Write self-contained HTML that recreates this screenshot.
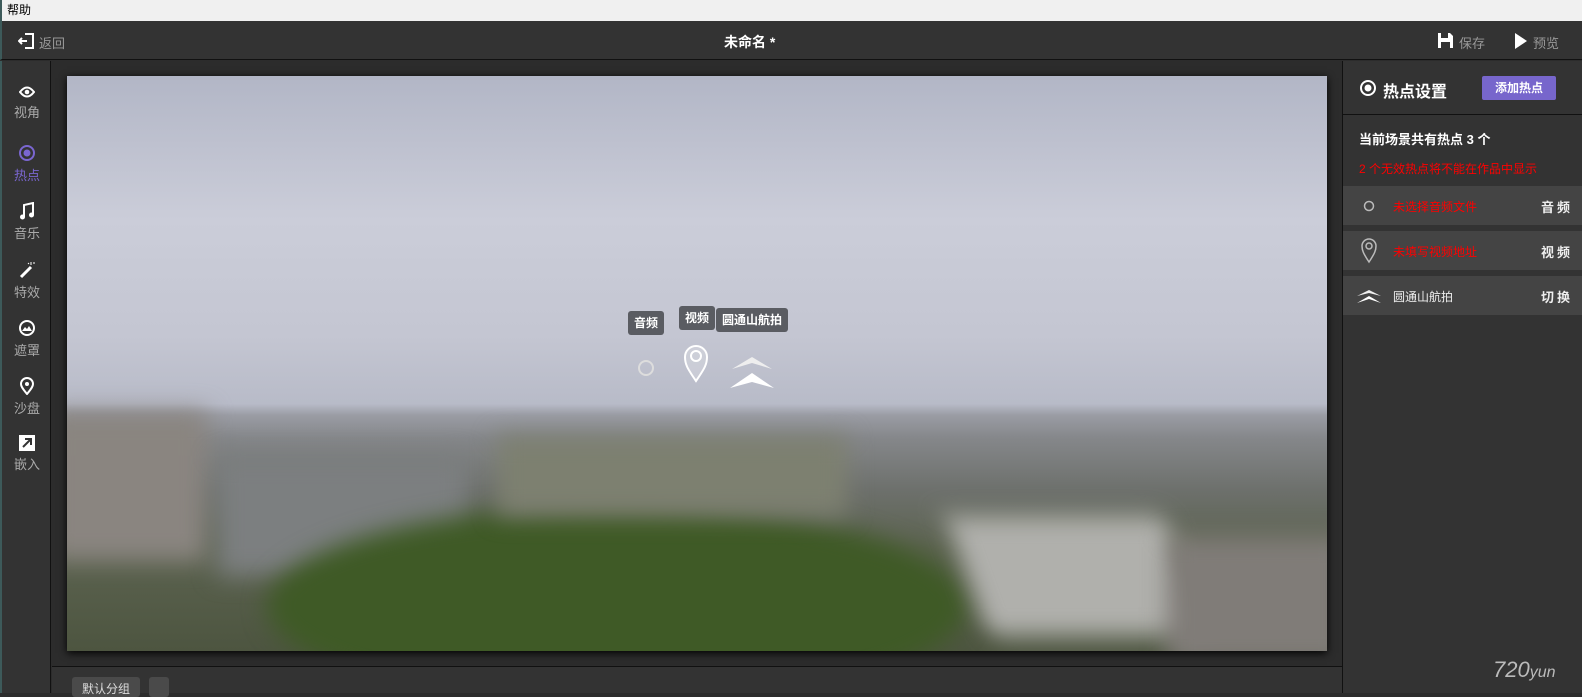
<!DOCTYPE html>
<html><head><meta charset="utf-8"><style>
*{margin:0;padding:0;box-sizing:border-box}
body{width:1582px;height:693px;overflow:hidden;background:#2c2c2c;font-family:"Liberation Sans","Noto Sans CJK SC",sans-serif;position:relative}
.abs{position:absolute}
#menu{left:0;top:0;width:1582px;height:21px;background:#f0f0f0;border-left:2px solid #3d5a5a;font-size:12px;line-height:21px;padding-left:5px;color:#000}
#top{left:0;top:21px;width:1582px;height:39px;background:#333;border-bottom:1px solid #111;border-left:2px solid #3d5a5a}
#side{left:0;top:61px;width:51px;height:632px;background:#333;border-right:1px solid #111;border-left:2px solid #3d5a5a}
.si{position:absolute;left:0;width:50px;text-align:center;font-size:13px;color:#aaa}
.si svg{display:block;margin:0 auto 3px}
#right{left:1342px;top:61px;width:240px;height:632px;background:#333;border-left:1px solid #111}
#pano{left:67px;top:76px;width:1260px;height:575px;overflow:hidden;box-shadow:0 2px 8px #000;
background:linear-gradient(180deg,#b2b6c6 0%,#cbcdd9 25%,#c4c6d2 45%,#b8bbc8 57%,#9a9ca4 59%,#85878a 63%,#6d706c 72%,#5c6350 82%,#4d5540 100%);}
.blob{position:absolute;filter:blur(12px)}
.tag{position:absolute;background:#5a5c62;color:#fff;font-size:12px;font-weight:bold;border-radius:3px;height:24px;line-height:24px;padding:0 6px;white-space:nowrap}
.row{position:absolute;left:0;width:240px;height:39px;background:#444;font-size:12px}
.row .t{position:absolute;left:50px;top:12px;color:#f00}
.row .k{position:absolute;right:10px;top:11px;color:#eee;font-weight:bold;letter-spacing:3px;font-size:13px}
</style></head><body>
<div id="menu" class="abs">帮助</div>
<div id="top" class="abs">
 <svg class="abs" style="left:16px;top:11px" width="18" height="18" viewBox="0 0 18 18"><path d="M7 2h8v14H7" fill="none" stroke="#fff" stroke-width="2"/><path d="M1 9h8M4 6l-3 3 3 3" fill="none" stroke="#fff" stroke-width="2"/></svg>
 <div class="abs" style="left:37px;top:12px;font-size:13px;color:#999">返回</div>
 <div class="abs" style="left:722px;top:11px;font-size:14px;color:#fff;font-weight:bold">未命名 *</div>
 <svg class="abs" style="left:1435px;top:11px" width="17" height="17" viewBox="0 0 17 17"><path d="M1 1h12l3 3v12H1z" fill="#fff"/><rect x="4" y="1" width="7" height="5" fill="#333"/><rect x="4" y="10" width="9" height="6" fill="#333"/></svg>
 <div class="abs" style="left:1457px;top:12px;font-size:13px;color:#999">保存</div>
 <svg class="abs" style="left:1512px;top:12px" width="14" height="16" viewBox="0 0 14 16"><path d="M1 0l12 8-12 8z" fill="#fff"/></svg>
 <div class="abs" style="left:1531px;top:12px;font-size:13px;color:#999">预览</div>
</div>
<div id="side" class="abs">
 <div class="si" style="top:24px"><svg width="16" height="14" viewBox="0 0 16 14"><path d="M1 7Q8-2 15 7Q8 16 1 7z" fill="none" stroke="#fff" stroke-width="2"/><circle cx="8" cy="7" r="2.3" fill="#fff"/></svg>视角</div>
 <div class="si" style="top:83px;color:#7a66d0"><svg width="18" height="18" viewBox="0 0 18 18"><circle cx="9" cy="9" r="7" fill="none" stroke="#7a66d0" stroke-width="2"/><circle cx="9" cy="9" r="3.5" fill="#7a66d0"/></svg>热点</div>
 <div class="si" style="top:141px"><svg width="16" height="18" viewBox="0 0 16 18"><path d="M5 15V3l9-2v12" fill="none" stroke="#fff" stroke-width="2"/><circle cx="3.5" cy="15" r="2.5" fill="#fff"/><circle cx="12.5" cy="13" r="2.5" fill="#fff"/></svg>音乐</div>
 <div class="si" style="top:200px"><svg width="16" height="18" viewBox="0 0 16 18"><path d="M2 16L12 6" stroke="#fff" stroke-width="3"/><path d="M12 1v3M14 2h3M9 2l1 1" stroke="#fff" stroke-width="1"/></svg>特效</div>
 <div class="si" style="top:258px"><svg width="18" height="18" viewBox="0 0 18 18"><circle cx="9" cy="9" r="7" fill="none" stroke="#fff" stroke-width="2"/><path d="M4 12l3-4 2 2 2-3 3 5z" fill="#fff"/></svg>遮罩</div>
 <div class="si" style="top:316px"><svg width="14" height="18" viewBox="0 0 14 18"><path d="M7 17C2 11 1 9 1 7a6 6 0 0112 0c0 2-1 4-6 10z" fill="none" stroke="#fff" stroke-width="2"/><circle cx="7" cy="7" r="2" fill="#fff"/></svg>沙盘</div>
 <div class="si" style="top:374px"><svg width="16" height="16" viewBox="0 0 16 16"><rect width="16" height="16" fill="#fff"/><path d="M4 12l7-7M6 4h6v6" stroke="#333" stroke-width="2" fill="none"/></svg>嵌入</div>
</div>
<div class="abs" style="left:52px;top:666px;width:1290px;height:27px;background:#333;border-top:1px solid #111">
 <div class="abs" style="left:20px;top:10px;height:20px;background:#4a4a4a;border-radius:3px;color:#ddd;font-size:12px;padding:3px 10px;white-space:nowrap">默认分组</div>
 <div class="abs" style="left:97px;top:10px;width:20px;height:20px;background:#4a4a4a;border-radius:3px"></div>
</div>
<div id="pano" class="abs">
 <div class="blob" style="left:-20px;top:335px;width:160px;height:150px;background:#8a8580"></div>
 <div class="blob" style="left:150px;top:380px;width:250px;height:120px;background:#7c7f80"></div>
 <div class="blob" style="left:200px;top:430px;width:700px;height:200px;background:#3f5a26;border-radius:50%"></div>
 <div class="blob" style="left:430px;top:360px;width:350px;height:80px;background:#7d8070"></div>
 <div class="blob" style="left:900px;top:440px;width:220px;height:120px;background:#b0b0ac;transform:skewX(20deg)"></div>
 <div class="blob" style="left:1100px;top:460px;width:180px;height:130px;background:#807c78"></div>
 <div class="tag" style="left:561px;top:235px">音频</div>
 <div class="tag" style="left:612px;top:230px">视频</div>
 <div class="tag" style="left:649px;top:232px">圆通山航拍</div>
 <svg class="abs" style="left:569px;top:282px" width="20" height="20"><circle cx="10" cy="10" r="7" fill="none" stroke="#ddd" stroke-width="2"/></svg>
 <svg class="abs" style="left:616px;top:268px" width="26" height="40" viewBox="0 0 26 40"><path d="M13 37C4 24 2 20 2 13a11 11 0 0122 0c0 7-2 11-11 24z" fill="rgba(255,255,255,.2)" stroke="#fff" stroke-width="2"/><circle cx="13" cy="12" r="5" fill="none" stroke="#fff" stroke-width="2"/></svg>
 <svg class="abs" style="left:660px;top:275px" width="50" height="40" viewBox="0 0 50 40"><path d="M5 18L25 6 45 18 25 12z" fill="#eee"/><path d="M3 37L25 22 47 37 25 31z" fill="#fff"/></svg>
</div>
<div id="right" class="abs">
 <svg class="abs" style="left:16px;top:18px" width="18" height="18" viewBox="0 0 18 18"><circle cx="9" cy="9" r="7" fill="none" stroke="#fff" stroke-width="2"/><circle cx="9" cy="9" r="3.5" fill="#fff"/></svg>
 <div class="abs" style="left:40px;top:17px;font-size:16px;color:#fff;font-weight:bold">热点设置</div>
 <div class="abs" style="left:139px;top:15px;width:74px;height:24px;background:#7766cc;border-radius:2px;color:#fff;font-size:12px;font-weight:bold;text-align:center;line-height:24px">添加热点</div>
 <div class="abs" style="left:0;top:53px;width:240px;height:1px;background:#111"></div>
 <div class="abs" style="left:16px;top:68px;font-size:13px;color:#fff;font-weight:bold">当前场景共有热点 3 个</div>
 <div class="abs" style="left:16px;top:99px;font-size:12px;color:#f00">2 个无效热点将不能在作品中显示</div>
 <div class="row" style="top:125px"><svg class="abs" style="left:20px;top:14px" width="12" height="12"><circle cx="6" cy="6" r="4.5" fill="none" stroke="#bbb" stroke-width="1.5"/></svg><span class="t">未选择音频文件</span><span class="k">音频</span></div>
 <div class="row" style="top:170px"><svg class="abs" style="left:18px;top:7px" width="16" height="26" viewBox="0 0 16 26"><path d="M8 24C2 15 1 12 1 8a7 7 0 0114 0c0 4-1 7-7 16z" fill="none" stroke="#bbb" stroke-width="1.5"/><circle cx="8" cy="8" r="3" fill="none" stroke="#bbb" stroke-width="1.5"/></svg><span class="t">未填写视频地址</span><span class="k">视频</span></div>
 <div class="row" style="top:215px"><svg class="abs" style="left:12px;top:13px" width="28" height="16" viewBox="0 0 28 16"><path d="M2 7L14 1 26 7 14 4z" fill="#eee"/><path d="M2 14L14 7 26 14 14 10z" fill="#fff"/></svg><span class="t" style="color:#eee">圆通山航拍</span><span class="k">切换</span></div>
 <div class="abs" style="left:150px;top:596px;font-size:22px;color:#bbb;font-style:italic">720<span style="font-size:16px">yun</span></div>
</div>
</body></html>
